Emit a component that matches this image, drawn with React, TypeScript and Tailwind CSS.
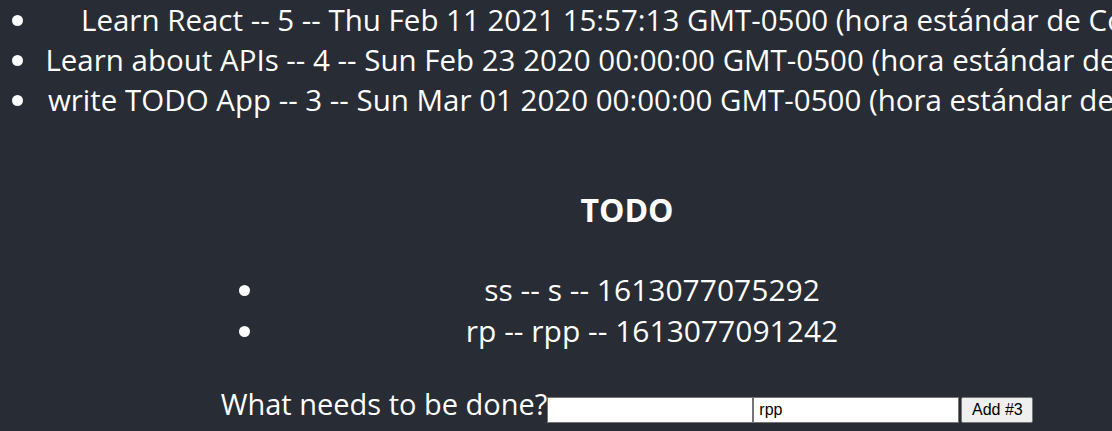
import React from 'react';

const goals = [
    { text: 'Learn React', priority: 5, date: 'Thu Feb 11 2021 15:57:13 GMT-0500 (hora estándar de Colombia)' },
    { text: 'Learn about APIs', priority: 4, date: 'Sun Feb 23 2020 00:00:00 GMT-0500 (hora estándar de Colombia)' },
    { text: 'write TODO App', priority: 3, date: 'Sun Mar 01 2020 00:00:00 GMT-0500 (hora estándar de Colombia)' },
];

const todos = [
    { id: 1613077075292, title: 'ss', detail: 's' },
    { id: 1613077091242, title: 'rp', detail: 'rpp' },
];

const App: React.FC = () => {
    return (
        <div className="min-h-[431px] w-full overflow-hidden bg-[#282c34] text-white font-['Open_Sans',sans-serif]">
            <div className="w-[1254px] text-center">
                <ul className="w-[1264px] list-disc pl-10 indent-[5px] text-[29.5px] leading-[40px] whitespace-nowrap">
                    {goals.map(g => (
                        <li key={g.text}>
                            {g.text} -- {g.priority} -- {g.date}
                        </li>
                    ))}
                </ul>

                <div className="mx-auto w-fit mt-[70px]">
                    <h3 className="text-[32px] leading-[40px] font-bold">TODO</h3>
                    <ul className="ml-[6px] mt-[39px] list-disc pl-10 indent-[4px] text-[30px] leading-[41px]">
                        {todos.map(t => (
                            <li key={t.id}>
                                {t.title} -- {t.detail} -- {t.id}
                            </li>
                        ))}
                    </ul>
                    <form className="mt-[32px] flex items-baseline text-[29px] leading-[41px] whitespace-nowrap">
                        <label htmlFor="new-todo">What needs to be done?</label>
                        <input
                            id="new-todo"
                            className="h-[26px] w-[206px] bg-white border border-[#767676] px-[2px] text-[16px] text-black font-['Liberation_Sans',Arial,sans-serif]"
                            defaultValue=""
                        />
                        <input
                            className="h-[26px] w-[206px] bg-white border border-[#767676] px-[5px] text-[16px] text-black font-['Liberation_Sans',Arial,sans-serif]"
                            defaultValue="rpp"
                        />
                        <button
                            type="button"
                            className="ml-[2px] h-[26px] w-[72px] bg-[#efefef] border border-[#767676] rounded-[2px] text-[16px] leading-[18px] text-black font-['Liberation_Sans',Arial,sans-serif]"
                        >
                            Add #3
                        </button>
                    </form>
                </div>
            </div>
        </div>
    );
};

export default App;
